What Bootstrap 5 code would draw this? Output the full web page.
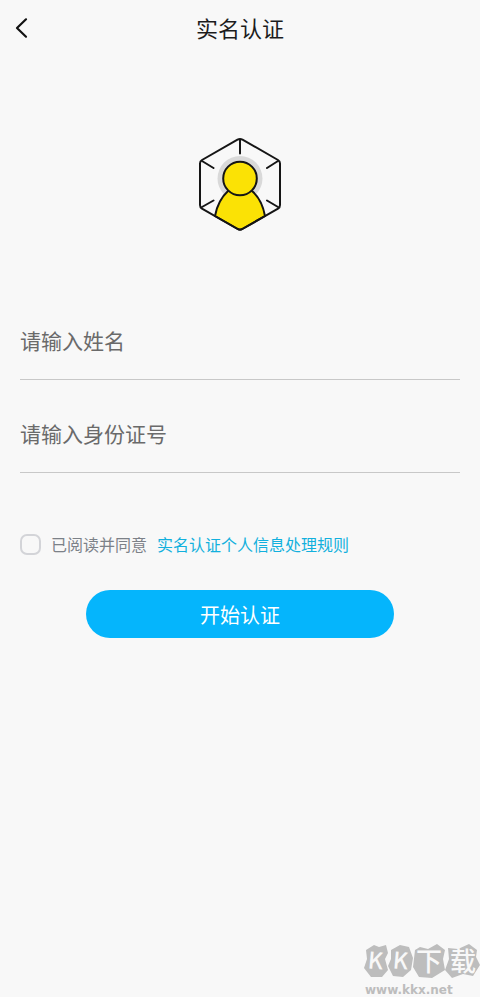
<!DOCTYPE html>
<html lang="zh-CN">
<head>
<meta charset="utf-8">
<meta name="viewport" content="width=device-width, initial-scale=1">
<title>实名认证</title>
<link href="https://cdn.jsdelivr.net/npm/bootstrap@5.3.0/dist/css/bootstrap.min.css" rel="stylesheet">
<style>
  body { background: #f8f8f8; color: #1c1c1c; font-family: "Noto Sans CJK SC", sans-serif; }
  .top-bar { display: grid; grid-template-columns: 56px 1fr 56px; height: 56px; }
  .back-btn { line-height: 0; }
  .page-title { padding-bottom: 2px; font-size: 22px; line-height: 32px; font-weight: 400; }
  .emblem { margin-top: 80px; }
  .fields { display: grid; gap: 19px; margin-top: 72px; }
  .line-input, .line-input:focus { height: 74px; padding: 0 0 6px; font-size: 21px; line-height: 32px; color: #333; background: transparent; border: 0; border-bottom: 1px solid #c8c8c8; border-radius: 0; box-shadow: none; }
  .line-input::placeholder { color: #6a6a6a; opacity: 1; }
  .agree { margin-top: 59px; font-size: 16px; line-height: 24px; color: #7c8188; }
  .agree .form-check-input { width: 21px; height: 21px; margin: 0 10px 0 0; border: 2px solid #d3d4d8; border-radius: 7px; background-color: transparent; }
  .agree label { margin-right: 10px; }
  .agree a { color: #12b0dd; }
  .start-btn, .start-btn:hover { width: 70%; height: 48px; margin-top: 34px; padding: 2px 0 0; font-size: 20px; line-height: 30px; color: #fff; background: #05b5fc; border: 0; }
  .site-mark { width: 118px; color: #bdbdbd; }
  .site-url { padding-left: 3px; font: bold 12px/14px "DejaVu Sans", sans-serif; }
</style>
<script src="https://cdn.jsdelivr.net/npm/bootstrap@5.3.0/dist/js/bootstrap.bundle.min.js" defer></script>
</head>
<body class="min-vh-100 d-flex flex-column">
<header class="top-bar align-items-center">
  <button type="button" class="back-btn btn border-0 text-start" aria-label="返回">
    <svg width="20" height="24" viewBox="0 0 20 24" fill="none" stroke="#111" stroke-width="2.2" stroke-linecap="round" stroke-linejoin="round"><path d="M14 3.300 5 12l9 8.700"/></svg>
  </button>
  <h1 class="page-title text-center m-0">实名认证</h1>
</header>
<main class="flex-grow-1 d-flex flex-column">
  <div class="emblem text-center">
    <svg class="d-block mx-auto" width="86" height="98" viewBox="0 0 86 98" fill="none" stroke="#151515" stroke-width="2" stroke-linecap="round" stroke-linejoin="round" aria-hidden="true">
      <circle cx="43" cy="42.500" r="22.500" fill="#d9d9d9" stroke="none"/>
      <path d="M18 80C20 69 24.500 61 31 55H55C62 61 66 69 68 80L46 92.500Q43 94.500 40 92.500Z" fill="#fbe205"/>
      <circle cx="43" cy="42.500" r="16.800" fill="#fbe205"/>
      <path d="M40.500 3.600Q43 2.200 45.500 3.600L81 24Q83 25.200 83 27.500V69Q83 71.500 81 72.700L45.500 93Q43 94.500 40.500 93L5 72.700Q3 71.500 3 69V27.500Q3 25.200 5 24Z"/>
      <path d="M43 4V17.500M5 25 16.500 32M81 25 70 32M5 71 16.500 64.500M81 71 70 64.500"/>
    </svg>
  </div>
  <form class="d-flex flex-column px-1">
    <div class="fields px-3">
      <input class="form-control line-input" type="text" placeholder="请输入姓名" aria-label="姓名">
      <input class="form-control line-input" type="text" placeholder="请输入身份证号" aria-label="身份证号">
    </div>
    <div class="agree d-flex align-items-center px-3">
      <input class="form-check-input" type="checkbox" id="agree">
      <label for="agree">已阅读并同意</label>
      <a class="text-decoration-none" href="#rules">实名认证个人信息处理规则</a>
    </div>
    <div class="px-3 text-center"><button type="button" class="start-btn btn rounded-pill">开始认证</button></div>
  </form>
</main>
<footer class="site-mark ms-auto">
  <svg class="d-block" width="118" height="40" viewBox="0 0 118 40" role="img" aria-label="KK下载">
    <g fill="#bdbdbd">
      <path d="M4 7 12 2 17 4 24 2 26 10 23 16 26 27 20 34 9 34 2 25 5 16Z"/>
      <path d="M29 7 38 2 47 4 51 15 49 27 41 34 31 33 26 23 29 16Z"/>
      <path d="M53 7 58 4 66 6 75 1 83 7 81 16 83 27 70 35 57 34 51 24Z"/>
      <path d="M86 5 96 6 107 1 115 7 114 14 118 22 111 33 101 31 90 35 83 27 87 16Z"/>
    </g>
    <g fill="#f8f8f8" font-family="Noto Sans CJK SC, sans-serif" font-weight="500">
      <text x="6" y="26" font-size="23" transform="rotate(5 14 18)">K</text>
      <text x="31" y="26" font-size="23" transform="rotate(5 39 18)">K</text>
      <text x="54" y="28" font-size="26">下</text>
      <text x="88" y="28" font-size="26">载</text>
    </g>
  </svg>
  <div class="site-url">www.kkx.net</div>
</footer>
</body>
</html>
